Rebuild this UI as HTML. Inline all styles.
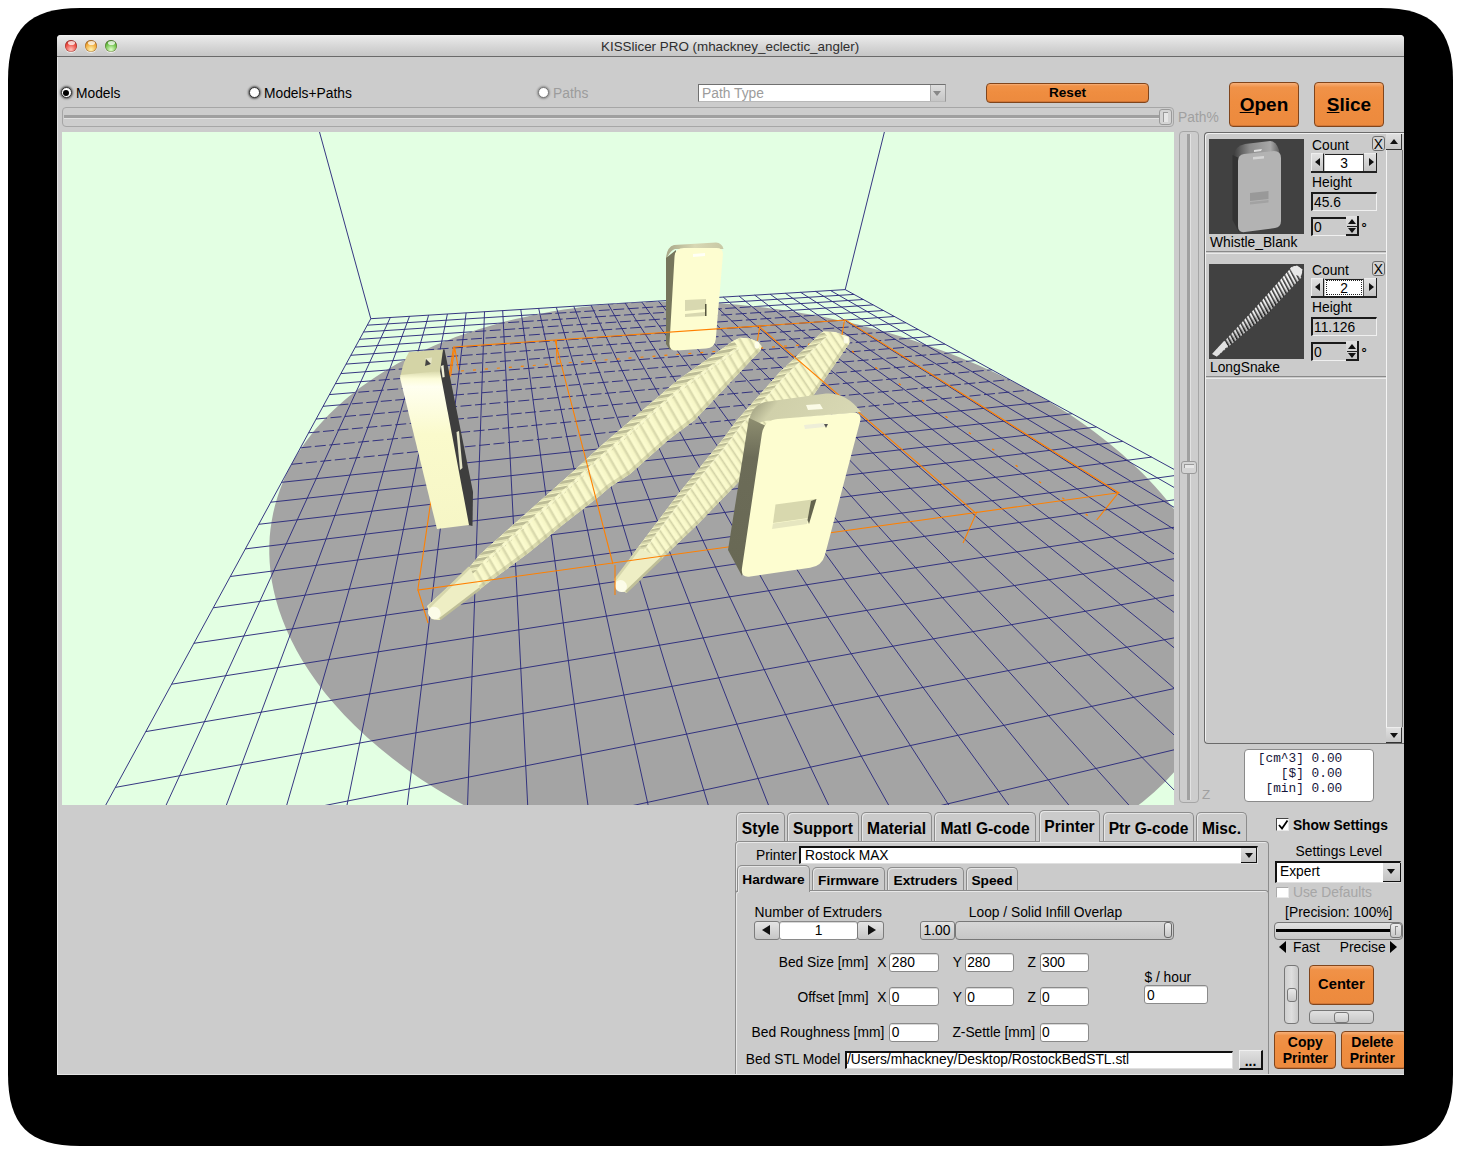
<!DOCTYPE html><html><head><meta charset="utf-8"><style>
*{box-sizing:border-box}
body{margin:0;width:1461px;height:1154px;background:#fff;position:relative;overflow:hidden;font-family:"Liberation Sans",sans-serif;color:#000}
.a{position:absolute}
.t{position:absolute;white-space:nowrap;line-height:1;font-size:13.8px}
.ob{position:absolute;background:linear-gradient(#f7b07a 0,#f09248 10%,#ef8d40 45%,#ec8a3e 100%);border:1px solid #80451c;border-radius:4px;font-weight:bold;text-align:center;white-space:nowrap;box-shadow:inset 0 -1px 0 #d27636}
.tab{position:absolute;background:#cbcbcb;border:1px solid #8c8c8c;border-bottom:none;border-radius:5px 5px 0 0;box-shadow:inset 1px 1px 0 #e6e6e6}
.fld{position:absolute;background:#fff;border:1px solid #8a8a8a;border-radius:3px;box-shadow:inset 0 1px 0 #d8d8d8}
.sb{position:absolute;background:linear-gradient(#e4e4e4,#c6c6c6);border:1px solid #7c7c7c;border-radius:3px}
</style></head><body><svg class="a" style="left:0;top:0" width="1461" height="1154"><path d="M80 8L1381 8C1432.12 8 1453 28.880000000000003 1453 80L1453 1074C1453 1125.12 1432.12 1146 1381 1146L80 1146C28.880000000000003 1146 8 1125.12 8 1074L8 80C8 28.880000000000003 28.880000000000003 8 80 8Z" fill="#000"/></svg>
<div class="a" style="left:57px;top:35px;width:1347px;height:1040px;background:#cccccc;border-radius:4px 4px 0 0;border-left:1px solid #e4e4e4;border-bottom:1px solid #e4e4e4"></div>
<div class="a" style="left:57px;top:35px;width:1347px;height:22px;background:linear-gradient(#f2f2f2 0,#e8e8e8 10%,#d6d6d6 55%,#c6c6c6 100%);border-radius:4px 4px 0 0;border-bottom:1px solid #6a6a6a"></div>
<div class="a" style="left:65px;top:40px;width:12px;height:12px;border-radius:50%;background:radial-gradient(circle at 50% 80%,#ffc0b8 0,#ea4a40 55%,#9a2820 100%);box-shadow:0 1px 1px rgba(255,255,255,.7),inset 0 0 0 0.6px rgba(60,0,0,.35)"></div>
<div class="a" style="left:67.5px;top:41px;width:7px;height:3.5px;border-radius:50%;background:rgba(255,255,255,.75)"></div>
<div class="a" style="left:85px;top:40px;width:12px;height:12px;border-radius:50%;background:radial-gradient(circle at 50% 80%,#fff4b0 0,#f0a838 55%,#9a6418 100%);box-shadow:0 1px 1px rgba(255,255,255,.7),inset 0 0 0 0.6px rgba(60,0,0,.35)"></div>
<div class="a" style="left:87.5px;top:41px;width:7px;height:3.5px;border-radius:50%;background:rgba(255,255,255,.75)"></div>
<div class="a" style="left:105px;top:40px;width:12px;height:12px;border-radius:50%;background:radial-gradient(circle at 50% 80%,#e0ffc8 0,#6cc048 55%,#347a22 100%);box-shadow:0 1px 1px rgba(255,255,255,.7),inset 0 0 0 0.6px rgba(60,0,0,.35)"></div>
<div class="a" style="left:107.5px;top:41px;width:7px;height:3.5px;border-radius:50%;background:rgba(255,255,255,.75)"></div>
<div class="t" style="left:601.0px;top:40.21px;font-size:13.4px;color:#2e2e2e">KISSlicer PRO (mhackney_eclectic_angler)</div>
<div class="a" style="left:60.5px;top:87.2px;width:11px;height:11px;border-radius:50%;background:#fff;border:1.5px solid #333;box-shadow:0 0 2px 1px rgba(0,0,0,.55)"></div>
<div class="a" style="left:63px;top:89.7px;width:6px;height:6px;border-radius:50%;background:#000"></div>
<div class="t" style="left:76.0px;top:86.78px;font-size:13.8px;">Models</div>
<div class="a" style="left:248.5px;top:87.4px;width:11px;height:11px;border-radius:50%;background:#fff;border:1.5px solid #333;box-shadow:0 0 2px 1px rgba(0,0,0,.55)"></div>
<div class="t" style="left:264.0px;top:86.78px;font-size:13.8px;">Models+Paths</div>
<div class="a" style="left:537.5px;top:87.3px;width:11px;height:11px;border-radius:50%;background:#fff;border:1.5px solid #777;box-shadow:0 0 2px 1px rgba(0,0,0,.3)"></div>
<div class="t" style="left:553.0px;top:86.78px;font-size:13.8px;color:#9c9c9c">Paths</div>
<div class="a" style="left:698px;top:84px;width:248px;height:18px;background:#fff;border:1px solid #707070;border-bottom-color:#b8b8b8;border-right-color:#999"></div>
<div class="a" style="left:930px;top:85px;width:15px;height:16px;background:linear-gradient(#dedede,#c6c6c6);border-left:1px solid #aaa"></div>
<div class="a" style="left:933px;top:91px;width:0;height:0;border-left:4.5px solid transparent;border-right:4.5px solid transparent;border-top:5px solid #888"></div>
<div class="t" style="left:702.0px;top:86.68px;font-size:13.8px;color:#9c9c9c">Path Type</div>
<div class="ob" style="left:986px;top:83px;width:163px;height:20px;font-size:13.6px;line-height:18px">Reset</div>
<div class="ob" style="left:1229px;top:82px;width:70px;height:45px;font-size:19px;line-height:43px"><u>O</u>pen</div>
<div class="ob" style="left:1314px;top:82px;width:70px;height:45px;font-size:19px;line-height:43px"><u>S</u>lice</div>
<div class="a" style="left:62px;top:107px;width:1112px;height:20px;border:1px solid #a6a6a6;border-radius:4px;background:#cdcdcd"></div>
<div class="a" style="left:64px;top:115px;width:1106px;height:4px;background:#a0a0a0;border-bottom:1px solid #e2e2e2"></div>
<div class="a" style="left:1159px;top:109px;width:13px;height:16px;border:1px solid #9a9a9a;border-radius:3px;background:#d4d4d4"></div>
<div class="a" style="left:1163px;top:112px;width:5px;height:10px;border-left:1px solid #999;border-top:1px solid #999;background:#e6e6e6"></div>
<div class="t" style="left:1178.0px;top:111.08px;font-size:13.8px;color:#a0a0a0">Path%</div>
<div class="a" style="left:62px;top:132px;width:1112px;height:673px;overflow:hidden"><svg width="1112" height="673" viewBox="62 132 1112 673" style="position:absolute;left:0;top:0;display:block">
<defs>
<linearGradient id="w1top" x1="0" y1="0" x2="1" y2="0"><stop offset="0" stop-color="#a8a888"/><stop offset="0.5" stop-color="#d8d8b4"/><stop offset="1" stop-color="#c8c8a4"/></linearGradient>
<linearGradient id="w2face" x1="0" y1="0" x2="0" y2="1"><stop offset="0" stop-color="#d8d8aa"/><stop offset="0.05" stop-color="#fcfcd8"/><stop offset="0.1" stop-color="#fffff0"/><stop offset="0.4" stop-color="#fafacc"/><stop offset="1" stop-color="#f6f6c6"/></linearGradient>
<linearGradient id="w3top" x1="0" y1="0" x2="1" y2="0.3"><stop offset="0" stop-color="#8a8a6e"/><stop offset="0.3" stop-color="#d0d0aa"/><stop offset="1" stop-color="#d8d8b4"/></linearGradient>
<linearGradient id="w3side" x1="0" y1="0" x2="0" y2="1"><stop offset="0" stop-color="#8e8e70"/><stop offset="0.25" stop-color="#6c6c58"/><stop offset="1" stop-color="#686854"/></linearGradient>
<linearGradient id="ribg" x1="0" x2="1" y1="0" y2="0"><stop offset="0" stop-color="#fcfcd0"/><stop offset="0.5" stop-color="#f6f6c6"/><stop offset="0.66" stop-color="#e2e2b4"/><stop offset="0.8" stop-color="#d0d0a6"/><stop offset="0.9" stop-color="#eeeebe"/><stop offset="1" stop-color="#fcfcd0"/></linearGradient>
<pattern id="rib1" patternUnits="userSpaceOnUse" width="8.6" height="200" patternTransform="rotate(-30)"><rect width="8.6" height="200" fill="url(#ribg)"/></pattern>
<pattern id="rib2" patternUnits="userSpaceOnUse" width="7" height="200" patternTransform="rotate(-34)"><rect width="7" height="200" fill="url(#ribg)"/></pattern>
<linearGradient id="rimg" x1="0" x2="1" y1="0" y2="0"><stop offset="0" stop-color="#fafac8"/><stop offset="0.35" stop-color="#e8e8b8"/><stop offset="1" stop-color="#9c9c78"/></linearGradient>
<pattern id="rim1" patternUnits="userSpaceOnUse" width="200" height="5.6" patternTransform="rotate(-10)"><rect width="200" height="5.6" fill="#f4f4c4"/><rect width="200" height="2.8" fill="#bcbc96"/><rect y="3.2" width="200" height="1.2" fill="#d8d8ae"/></pattern>
<pattern id="rim2" patternUnits="userSpaceOnUse" width="200" height="4.6" patternTransform="rotate(-12)"><rect width="200" height="4.6" fill="#f4f4c4"/><rect width="200" height="2.3" fill="#bcbc96"/><rect y="2.6" width="200" height="1" fill="#d8d8ae"/></pattern>
<linearGradient id="sh1" gradientUnits="userSpaceOnUse" x1="560" y1="470" x2="600" y2="517"><stop offset="0" stop-color="#000" stop-opacity="0.22"/><stop offset="0.25" stop-color="#000" stop-opacity="0"/><stop offset="0.8" stop-color="#fff" stop-opacity="0.05"/><stop offset="1" stop-color="#000" stop-opacity="0.08"/></linearGradient>
<linearGradient id="sh2" gradientUnits="userSpaceOnUse" x1="700" y1="455" x2="740" y2="490"><stop offset="0" stop-color="#000" stop-opacity="0.22"/><stop offset="0.3" stop-color="#000" stop-opacity="0"/><stop offset="1" stop-color="#000" stop-opacity="0.05"/></linearGradient>
</defs>
<rect x="62" y="132" width="1112" height="673" fill="#e3ffe3"/>
<polygon points="1029.0,390.1 1036.3,394.2 1043.7,398.4 1051.0,402.7 1058.2,407.2 1065.5,411.8 1072.8,416.6 1080.0,421.5 1087.1,426.5 1094.3,431.8 1101.4,437.2 1108.4,442.7 1115.3,448.4 1122.2,454.3 1129.0,460.4 1135.7,466.7 1142.3,473.1 1148.8,479.7 1155.1,486.5 1161.3,493.6 1167.4,500.8 1173.2,508.2 1178.9,515.8 1184.3,523.6 1189.5,531.6 1194.5,539.8 1199.2,548.2 1203.6,556.8 1207.6,565.7 1211.3,574.7 1214.6,583.9 1217.6,593.3 1220.1,602.9 1222.1,612.7 1223.7,622.7 1224.7,632.8 1225.1,643.0 1225.0,653.4 1224.2,664.0 1222.8,674.6 1220.7,685.4 1217.8,696.2 1214.2,707.0 1209.8,717.9 1204.5,728.8 1198.4,739.6 1191.4,750.4 1183.5,761.1 1174.7,771.6 1164.9,782.0 1154.1,792.2 1142.3,802.2 1129.5,811.8 1115.8,821.1 1101.0,830.1 1085.3,838.6 1068.6,846.7 1051.0,854.2 1032.5,861.2 1013.1,867.7 992.9,873.5 971.9,878.7 950.2,883.1 927.9,886.9 905.0,889.9 881.6,892.1 857.8,893.6 833.6,894.3 809.3,894.2 784.7,893.3 760.1,891.7 735.6,889.2 711.1,886.0 686.9,882.1 662.9,877.5 639.4,872.2 616.2,866.2 593.6,859.6 571.5,852.4 550.1,844.7 529.3,836.5 509.3,827.9 490.1,818.8 471.6,809.4 454.0,799.7 437.2,789.6 421.3,779.4 406.3,768.9 392.2,758.3 378.9,747.6 366.5,736.7 354.9,725.8 344.2,714.9 334.3,704.0 325.2,693.2 316.9,682.3 309.4,671.6 302.6,660.9 296.6,650.4 291.2,640.0 286.5,629.8 282.4,619.6 278.9,609.7 276.0,600.0 273.7,590.4 271.8,581.0 270.5,571.8 269.7,562.8 269.3,554.0 269.3,545.4 269.7,537.0 270.5,528.9 271.7,520.9 273.2,513.1 275.0,505.5 277.1,498.2 279.5,491.0 282.1,484.0 285.0,477.3 288.1,470.7 291.5,464.3 295.0,458.1 298.7,452.0 302.6,446.2 306.7,440.5 310.9,435.0 315.2,429.6 319.7,424.4 324.3,419.4 329.0,414.5 333.9,409.8 338.8,405.2 343.8,400.8 348.9,396.5 354.1,392.4 359.3,388.3 364.6,384.4 370.0,380.7 375.5,377.0 381.0,373.5 386.5,370.1 392.1,366.8 397.7,363.6 403.4,360.5 409.1,357.5 414.8,354.6 420.6,351.9 426.3,349.2 432.2,346.6 438.0,344.1 443.9,341.7 449.7,339.4 455.6,337.1 461.5,335.0 467.5,332.9 473.4,330.9 479.4,329.0 485.4,327.2 491.3,325.4 497.3,323.8 503.3,322.1 509.3,320.6 515.4,319.1 521.4,317.7 527.4,316.4 533.5,315.1 539.5,313.9 545.6,312.7 551.7,311.6 557.8,310.6 563.8,309.6 569.9,308.7 576.0,307.9 582.2,307.1 588.3,306.4 594.4,305.7 600.5,305.0 606.7,304.5 612.8,304.0 619.0,303.5 625.2,303.1 631.4,302.7 637.5,302.4 643.8,302.2 650.0,302.0 656.2,301.9 662.4,301.8 668.7,301.7 675.0,301.8 681.2,301.8 687.5,301.9 693.8,302.1 700.2,302.3 706.5,302.6 712.9,302.9 719.2,303.3 725.6,303.8 732.0,304.3 738.4,304.8 744.9,305.4 751.4,306.1 757.8,306.8 764.3,307.5 770.9,308.4 777.4,309.2 784.0,310.2 790.6,311.2 797.2,312.2 803.8,313.4 810.5,314.5 817.2,315.8 823.9,317.1 830.6,318.5 837.4,319.9 844.2,321.4 851.0,323.0 857.8,324.6 864.7,326.4 871.6,328.2 878.5,330.0 885.4,332.0 892.4,334.0 899.4,336.1 906.4,338.3 913.5,340.5 920.5,342.9 927.6,345.3 934.8,347.9 941.9,350.5 949.1,353.2 956.3,356.0 963.5,358.9 970.7,362.0 978.0,365.1 985.2,368.3 992.5,371.6 999.8,375.1 1007.1,378.7 1014.4,382.4 1021.7,386.2" fill="#a4a4a4"/>
<clipPath id="inE"><path d="M1029.0 390.1 L1036.3 394.2 L1043.7 398.4 L1051.0 402.7 L1058.2 407.2 L1065.5 411.8 L1072.8 416.6 L1080.0 421.5 L1087.1 426.5 L1094.3 431.8 L1101.4 437.2 L1108.4 442.7 L1115.3 448.4 L1122.2 454.3 L1129.0 460.4 L1135.7 466.7 L1142.3 473.1 L1148.8 479.7 L1155.1 486.5 L1161.3 493.6 L1167.4 500.8 L1173.2 508.2 L1178.9 515.8 L1184.3 523.6 L1189.5 531.6 L1194.5 539.8 L1199.2 548.2 L1203.6 556.8 L1207.6 565.7 L1211.3 574.7 L1214.6 583.9 L1217.6 593.3 L1220.1 602.9 L1222.1 612.7 L1223.7 622.7 L1224.7 632.8 L1225.1 643.0 L1225.0 653.4 L1224.2 664.0 L1222.8 674.6 L1220.7 685.4 L1217.8 696.2 L1214.2 707.0 L1209.8 717.9 L1204.5 728.8 L1198.4 739.6 L1191.4 750.4 L1183.5 761.1 L1174.7 771.6 L1164.9 782.0 L1154.1 792.2 L1142.3 802.2 L1129.5 811.8 L1115.8 821.1 L1101.0 830.1 L1085.3 838.6 L1068.6 846.7 L1051.0 854.2 L1032.5 861.2 L1013.1 867.7 L992.9 873.5 L971.9 878.7 L950.2 883.1 L927.9 886.9 L905.0 889.9 L881.6 892.1 L857.8 893.6 L833.6 894.3 L809.3 894.2 L784.7 893.3 L760.1 891.7 L735.6 889.2 L711.1 886.0 L686.9 882.1 L662.9 877.5 L639.4 872.2 L616.2 866.2 L593.6 859.6 L571.5 852.4 L550.1 844.7 L529.3 836.5 L509.3 827.9 L490.1 818.8 L471.6 809.4 L454.0 799.7 L437.2 789.6 L421.3 779.4 L406.3 768.9 L392.2 758.3 L378.9 747.6 L366.5 736.7 L354.9 725.8 L344.2 714.9 L334.3 704.0 L325.2 693.2 L316.9 682.3 L309.4 671.6 L302.6 660.9 L296.6 650.4 L291.2 640.0 L286.5 629.8 L282.4 619.6 L278.9 609.7 L276.0 600.0 L273.7 590.4 L271.8 581.0 L270.5 571.8 L269.7 562.8 L269.3 554.0 L269.3 545.4 L269.7 537.0 L270.5 528.9 L271.7 520.9 L273.2 513.1 L275.0 505.5 L277.1 498.2 L279.5 491.0 L282.1 484.0 L285.0 477.3 L288.1 470.7 L291.5 464.3 L295.0 458.1 L298.7 452.0 L302.6 446.2 L306.7 440.5 L310.9 435.0 L315.2 429.6 L319.7 424.4 L324.3 419.4 L329.0 414.5 L333.9 409.8 L338.8 405.2 L343.8 400.8 L348.9 396.5 L354.1 392.4 L359.3 388.3 L364.6 384.4 L370.0 380.7 L375.5 377.0 L381.0 373.5 L386.5 370.1 L392.1 366.8 L397.7 363.6 L403.4 360.5 L409.1 357.5 L414.8 354.6 L420.6 351.9 L426.3 349.2 L432.2 346.6 L438.0 344.1 L443.9 341.7 L449.7 339.4 L455.6 337.1 L461.5 335.0 L467.5 332.9 L473.4 330.9 L479.4 329.0 L485.4 327.2 L491.3 325.4 L497.3 323.8 L503.3 322.1 L509.3 320.6 L515.4 319.1 L521.4 317.7 L527.4 316.4 L533.5 315.1 L539.5 313.9 L545.6 312.7 L551.7 311.6 L557.8 310.6 L563.8 309.6 L569.9 308.7 L576.0 307.9 L582.2 307.1 L588.3 306.4 L594.4 305.7 L600.5 305.0 L606.7 304.5 L612.8 304.0 L619.0 303.5 L625.2 303.1 L631.4 302.7 L637.5 302.4 L643.8 302.2 L650.0 302.0 L656.2 301.9 L662.4 301.8 L668.7 301.7 L675.0 301.8 L681.2 301.8 L687.5 301.9 L693.8 302.1 L700.2 302.3 L706.5 302.6 L712.9 302.9 L719.2 303.3 L725.6 303.8 L732.0 304.3 L738.4 304.8 L744.9 305.4 L751.4 306.1 L757.8 306.8 L764.3 307.5 L770.9 308.4 L777.4 309.2 L784.0 310.2 L790.6 311.2 L797.2 312.2 L803.8 313.4 L810.5 314.5 L817.2 315.8 L823.9 317.1 L830.6 318.5 L837.4 319.9 L844.2 321.4 L851.0 323.0 L857.8 324.6 L864.7 326.4 L871.6 328.2 L878.5 330.0 L885.4 332.0 L892.4 334.0 L899.4 336.1 L906.4 338.3 L913.5 340.5 L920.5 342.9 L927.6 345.3 L934.8 347.9 L941.9 350.5 L949.1 353.2 L956.3 356.0 L963.5 358.9 L970.7 362.0 L978.0 365.1 L985.2 368.3 L992.5 371.6 L999.8 375.1 L1007.1 378.7 L1014.4 382.4 L1021.7 386.2Z"/></clipPath>
<clipPath id="outE"><path clip-rule="evenodd" d="M62 132h1112v673h-1112Z M1029.0 390.1 L1036.3 394.2 L1043.7 398.4 L1051.0 402.7 L1058.2 407.2 L1065.5 411.8 L1072.8 416.6 L1080.0 421.5 L1087.1 426.5 L1094.3 431.8 L1101.4 437.2 L1108.4 442.7 L1115.3 448.4 L1122.2 454.3 L1129.0 460.4 L1135.7 466.7 L1142.3 473.1 L1148.8 479.7 L1155.1 486.5 L1161.3 493.6 L1167.4 500.8 L1173.2 508.2 L1178.9 515.8 L1184.3 523.6 L1189.5 531.6 L1194.5 539.8 L1199.2 548.2 L1203.6 556.8 L1207.6 565.7 L1211.3 574.7 L1214.6 583.9 L1217.6 593.3 L1220.1 602.9 L1222.1 612.7 L1223.7 622.7 L1224.7 632.8 L1225.1 643.0 L1225.0 653.4 L1224.2 664.0 L1222.8 674.6 L1220.7 685.4 L1217.8 696.2 L1214.2 707.0 L1209.8 717.9 L1204.5 728.8 L1198.4 739.6 L1191.4 750.4 L1183.5 761.1 L1174.7 771.6 L1164.9 782.0 L1154.1 792.2 L1142.3 802.2 L1129.5 811.8 L1115.8 821.1 L1101.0 830.1 L1085.3 838.6 L1068.6 846.7 L1051.0 854.2 L1032.5 861.2 L1013.1 867.7 L992.9 873.5 L971.9 878.7 L950.2 883.1 L927.9 886.9 L905.0 889.9 L881.6 892.1 L857.8 893.6 L833.6 894.3 L809.3 894.2 L784.7 893.3 L760.1 891.7 L735.6 889.2 L711.1 886.0 L686.9 882.1 L662.9 877.5 L639.4 872.2 L616.2 866.2 L593.6 859.6 L571.5 852.4 L550.1 844.7 L529.3 836.5 L509.3 827.9 L490.1 818.8 L471.6 809.4 L454.0 799.7 L437.2 789.6 L421.3 779.4 L406.3 768.9 L392.2 758.3 L378.9 747.6 L366.5 736.7 L354.9 725.8 L344.2 714.9 L334.3 704.0 L325.2 693.2 L316.9 682.3 L309.4 671.6 L302.6 660.9 L296.6 650.4 L291.2 640.0 L286.5 629.8 L282.4 619.6 L278.9 609.7 L276.0 600.0 L273.7 590.4 L271.8 581.0 L270.5 571.8 L269.7 562.8 L269.3 554.0 L269.3 545.4 L269.7 537.0 L270.5 528.9 L271.7 520.9 L273.2 513.1 L275.0 505.5 L277.1 498.2 L279.5 491.0 L282.1 484.0 L285.0 477.3 L288.1 470.7 L291.5 464.3 L295.0 458.1 L298.7 452.0 L302.6 446.2 L306.7 440.5 L310.9 435.0 L315.2 429.6 L319.7 424.4 L324.3 419.4 L329.0 414.5 L333.9 409.8 L338.8 405.2 L343.8 400.8 L348.9 396.5 L354.1 392.4 L359.3 388.3 L364.6 384.4 L370.0 380.7 L375.5 377.0 L381.0 373.5 L386.5 370.1 L392.1 366.8 L397.7 363.6 L403.4 360.5 L409.1 357.5 L414.8 354.6 L420.6 351.9 L426.3 349.2 L432.2 346.6 L438.0 344.1 L443.9 341.7 L449.7 339.4 L455.6 337.1 L461.5 335.0 L467.5 332.9 L473.4 330.9 L479.4 329.0 L485.4 327.2 L491.3 325.4 L497.3 323.8 L503.3 322.1 L509.3 320.6 L515.4 319.1 L521.4 317.7 L527.4 316.4 L533.5 315.1 L539.5 313.9 L545.6 312.7 L551.7 311.6 L557.8 310.6 L563.8 309.6 L569.9 308.7 L576.0 307.9 L582.2 307.1 L588.3 306.4 L594.4 305.7 L600.5 305.0 L606.7 304.5 L612.8 304.0 L619.0 303.5 L625.2 303.1 L631.4 302.7 L637.5 302.4 L643.8 302.2 L650.0 302.0 L656.2 301.9 L662.4 301.8 L668.7 301.7 L675.0 301.8 L681.2 301.8 L687.5 301.9 L693.8 302.1 L700.2 302.3 L706.5 302.6 L712.9 302.9 L719.2 303.3 L725.6 303.8 L732.0 304.3 L738.4 304.8 L744.9 305.4 L751.4 306.1 L757.8 306.8 L764.3 307.5 L770.9 308.4 L777.4 309.2 L784.0 310.2 L790.6 311.2 L797.2 312.2 L803.8 313.4 L810.5 314.5 L817.2 315.8 L823.9 317.1 L830.6 318.5 L837.4 319.9 L844.2 321.4 L851.0 323.0 L857.8 324.6 L864.7 326.4 L871.6 328.2 L878.5 330.0 L885.4 332.0 L892.4 334.0 L899.4 336.1 L906.4 338.3 L913.5 340.5 L920.5 342.9 L927.6 345.3 L934.8 347.9 L941.9 350.5 L949.1 353.2 L956.3 356.0 L963.5 358.9 L970.7 362.0 L978.0 365.1 L985.2 368.3 L992.5 371.6 L999.8 375.1 L1007.1 378.7 L1014.4 382.4 L1021.7 386.2Z"/></clipPath>
<path d="M370.8 318.7L-88.6 1161.7M390.3 317.5L14.8 1134.2M409.5 316.3L112.9 1108.0M428.6 315.2L206.2 1083.1M447.4 314.0L295.0 1059.5M466.1 312.9L379.6 1036.9M484.5 311.7L460.3 1015.4M502.7 310.6L537.3 994.9M520.8 309.5L611.0 975.3M538.7 308.4L681.5 956.5M556.3 307.3L749.0 938.5M573.8 306.3L813.8 921.2M591.1 305.2L875.9 904.7M608.2 304.1L935.5 888.8M625.2 303.1L992.9 873.5M641.9 302.1L1048.0 858.8M281.6 482.3L1049.8 401.4M658.5 301.1L1101.1 844.7M270.8 502.2L1072.2 413.7M675.0 300.0L1152.2 831.0M258.7 524.3L1096.4 427.0M691.2 299.0L1201.5 817.9M245.3 548.9L1122.8 441.4M707.3 298.1L1249.0 805.2M230.3 576.5L1151.6 457.1M723.3 297.1L1294.9 793.0M213.3 607.8L1183.2 474.4M739.0 296.1L1339.2 781.2M193.9 643.3L1217.9 493.4M754.7 295.1L1382.1 769.8M171.6 684.2L1256.3 514.4M770.1 294.2L1423.5 758.7M145.8 731.6L1298.9 537.7M785.4 293.3L1463.5 748.1M115.4 787.4L1346.7 563.8M800.6 292.3L1502.3 737.7M79.1 854.0L1400.4 593.2M815.6 291.4L1539.9 727.7M35.1 934.7L1461.3 626.5M830.5 290.5L1576.2 718.0M-19.3 1034.7L1531.0 664.6M845.2 289.6L1611.5 708.6M-88.6 1161.7L1611.5 708.6M370.8 318.7L319.5 132M845.2 289.6L884.4 132" stroke="#2c2c7c" stroke-width="0.95" fill="none"/>
<path d="M370.8 318.7L845.2 289.6M367.2 325.2L854.1 294.4M363.5 332.0L863.4 299.5M359.5 339.3L873.2 304.9M355.3 347.1L883.5 310.5M350.8 355.3L894.4 316.5M346.0 364.1L905.9 322.8M340.9 373.6L918.2 329.5M335.4 383.7L931.1 336.5M329.4 394.6L944.9 344.1M323.0 406.3L959.5 352.1M316.1 419.0L975.2 360.6M308.6 432.8L991.9 369.8M300.4 447.8L1009.8 379.6M291.5 464.3L1029.0 390.1" stroke="#2c2c7c" stroke-width="0.95" fill="none" clip-path="url(#outE)"/>
<path d="M370.8 318.7L845.2 289.6M367.2 325.2L854.1 294.4M363.5 332.0L863.4 299.5M359.5 339.3L873.2 304.9M355.3 347.1L883.5 310.5M350.8 355.3L894.4 316.5M346.0 364.1L905.9 322.8M340.9 373.6L918.2 329.5M335.4 383.7L931.1 336.5M329.4 394.6L944.9 344.1M323.0 406.3L959.5 352.1M316.1 419.0L975.2 360.6M308.6 432.8L991.9 369.8M300.4 447.8L1009.8 379.6M291.5 464.3L1029.0 390.1" stroke="#2c2c7c" stroke-width="0.95" fill="none" clip-path="url(#inE)" stroke-dasharray="11 3.5"/>
<path d="M666 258Q667 247 674 245L716 242.5Q722 243 723.5 249L675 249Q670 251 667 258Z" fill="url(#w1top)"/>
<polygon points="666.0,258.0 676.0,250.0 675.0,345.0 670.0,350.0 666.0,344.0" fill="#76765c"/>
<path d="M674.5 257.0Q675.0 248.0 684.0 248.0L716.5 248.0Q723.5 248.0 722.9 255.0L715.8 339.0Q715.0 348.0 706.0 348.6L677.0 350.5Q669.0 351.0 669.5 343.0Z" fill="#fdfdd0"/>
<polygon points="685.0,300.0 706.0,299.0 706.0,309.0 685.0,311.0" fill="#d8d8b0"/>
<polygon points="685.0,314.0 705.0,312.0 705.0,316.0 685.0,317.0" fill="#d8d8b0"/>
<polygon points="705.0,304.0 706.5,304.0 706.5,316.0 705.0,316.0" fill="#55553f"/>
<polygon points="693.0,254.0 705.0,253.0 705.0,256.0 693.0,257.0" fill="#ffffff" opacity="0.8"/>
<path d="M461 371L839 342" stroke="#ff8000" stroke-width="1.2" fill="none" stroke-dasharray="3 9"/>
<path d="M852 351L1097 522" stroke="#ff8000" stroke-width="1.3" fill="none" stroke-dasharray="2.5 26"/>
<clipPath id="cs1"><path d="M428.0 607.0 L469.7 567.0 L480.0 554.5 L574.9 470.0 L600.0 446.7 L678.0 380.0 L733.7 340.8 L739.8 337.8 L750.0 338.5 L758.0 342.1 L761.5 346.0 L760.6 350.3 L694.7 420.0 L668.2 440.0 L630.0 474.0 L610.0 487.1 L599.6 496.0 L563.2 524.6 L528.1 553.2 L487.8 583.1 L480.2 589.0 L439.6 619.8 L432.0 619.0 L428.0 613.0Z"/></clipPath>
<path d="M428.0 607.0 L469.7 567.0 L480.0 554.5 L574.9 470.0 L600.0 446.7 L678.0 380.0 L733.7 340.8 L739.8 337.8 L750.0 338.5 L758.0 342.1 L761.5 346.0 L760.6 350.3 L694.7 420.0 L668.2 440.0 L630.0 474.0 L610.0 487.1 L599.6 496.0 L563.2 524.6 L528.1 553.2 L487.8 583.1 L480.2 589.0 L439.6 619.8 L432.0 619.0 L428.0 613.0Z" fill="#f6f6c8"/>
<g clip-path="url(#cs1)">
<rect x="420" y="330" width="350" height="300" fill="url(#rib1)"/>
<path d="M760.6 350.3 L694.7 420.0 L668.2 440.0 L630.0 474.0 L610.0 487.1 L599.6 496.0 L563.2 524.6 L528.1 553.2 L487.8 583.1 L480.2 589.0 L439.6 619.8" stroke="#a0a078" stroke-opacity=".35" stroke-width="7" fill="none"/>
<path d="M428.0 607.0 L469.7 567.0 L480.0 554.5 L574.9 470.0 L600.0 446.7 L678.0 380.0 L733.7 340.8" stroke="url(#rim1)" stroke-width="14" fill="none"/>
<path d="M485.8 561.3 L580.7 476.8 L605.8 453.5 L683.8 386.8 L739.5 347.6" stroke="#f6f6d4" stroke-opacity=".7" stroke-width="1" fill="none"/>
<path d="M486.8 562.3 L581.7 477.8 L606.8 454.5 L684.8 387.8 L740.5 348.6" stroke="#c4c49c" stroke-opacity=".6" stroke-width="1" stroke-dasharray="2 6" fill="none"/>
</g>
<polygon points="427.0,606.0 469.7,567.0 480.2,589.0 439.6,619.8 432.0,619.0" fill="#eeeec4"/>
<path d="M429 607L469.5 567.5" stroke="#d6d6ac" stroke-width="2.5"/>
<path d="M440 619L480 588.5" stroke="#bfbf98" stroke-width="2.5"/>
<ellipse cx="434.5" cy="613" rx="6" ry="6.5" fill="#fcfce8" transform="rotate(-40 434.5 613)"/>
<ellipse cx="757" cy="345" rx="2.5" ry="3.5" fill="#ffffee" opacity=".85"/>
<clipPath id="cs2"><path d="M615.5 580.0 L637.7 548.1 L679.3 492.7 L722.3 440.0 L737.2 420.0 L780.0 372.0 L823.0 331.5 L835.0 332.0 L849.0 337.0 L849.5 343.0 L847.8 345.5 L814.0 394.5 L760.0 460.0 L740.3 480.2 L698.7 523.2 L662.7 557.8 L626.6 592.5 L617.0 590.0Z"/></clipPath>
<path d="M615.5 580.0 L637.7 548.1 L679.3 492.7 L722.3 440.0 L737.2 420.0 L780.0 372.0 L823.0 331.5 L835.0 332.0 L849.0 337.0 L849.5 343.0 L847.8 345.5 L814.0 394.5 L760.0 460.0 L740.3 480.2 L698.7 523.2 L662.7 557.8 L626.6 592.5 L617.0 590.0Z" fill="#f6f6c8"/>
<g clip-path="url(#cs2)">
<rect x="600" y="320" width="260" height="280" fill="url(#rib2)"/>
<path d="M847.8 345.5 L814.0 394.5 L760.0 460.0 L740.3 480.2 L698.7 523.2 L662.7 557.8 L626.6 592.5" stroke="#a0a078" stroke-opacity=".35" stroke-width="6" fill="none"/>
<path d="M615.5 580.0 L637.7 548.1 L679.3 492.7 L722.3 440.0 L737.2 420.0 L780.0 372.0 L823.0 331.5" stroke="url(#rim2)" stroke-width="12" fill="none"/>
<path d="M643.0 552.7 L684.6 497.3 L727.6 444.6 L742.5 424.6 L785.3 376.6 L828.3 336.1" stroke="#f6f6d4" stroke-opacity=".7" stroke-width="1" fill="none"/>
</g>
<polygon points="614.5,580.0 637.7,548.1 662.7,557.8 626.6,592.5 617.0,590.0" fill="#eeeec4"/>
<path d="M615 580L640.5 546.5" stroke="#d6d6ac" stroke-width="2.5"/>
<path d="M626 592L662 557.5" stroke="#bfbf98" stroke-width="2.5"/>
<ellipse cx="621.1" cy="585.6" rx="5.8" ry="6.2" fill="#fcfce8" transform="rotate(-45 621.5 586)"/>
<ellipse cx="846" cy="340" rx="2.5" ry="3.5" fill="#ffffee" opacity=".85"/>
<path d="M453.5 347.0 L845.7 320.0 L1118.7 492.7 L417.8 590.0ZM555.0 340.2L612.9 564.0M758.2 325.7L975.6 512.9M418 590L428 623M615 565L615 595M977 511.6L963 543M1118.5 492.7L1096.7 520M454.7 347.8L450.6 376.5M454.7 347.8L458.8 370.3M556.4 340.6L557 364.2M760 325.6L757.4 340.6M844.5 319.8L842 335" stroke="#ff8000" stroke-width="1.1" fill="none"/>
<polygon points="442.5,349.5 444.5,349.5 473.0,492.0 472.5,526.0 468.0,525.0 438.3,379.0" fill="#3e3e3e"/>
<path d="M400.5 376Q403 362 409 352L443 349.5L440 371.5Z" fill="#d4d4a6"/>
<polygon points="400.5,375.0 440.0,371.0 469.0,525.0 437.0,529.0 400.0,378.0" fill="url(#w2face)"/>
<polygon points="425.0,358.5 432.0,357.5 431.0,365.5" fill="#e8e8c8"/>
<polygon points="426.0,359.0 431.0,364.0 425.0,366.0" fill="#444"/>
<polygon points="456.5,432.0 459.0,431.0 462.5,468.0 460.0,470.0" fill="#e6e6c8"/>
<polygon points="441.0,366.0 443.5,365.0 444.7,377.0 442.5,377.5" fill="#f0f0d8"/>
<path d="M749 422Q751 406 765 402L826 393.5Q846 392 861 412L764 421Q754 424 750 436Z" fill="url(#w3top)"/>
<polygon points="749.0,418.0 766.0,426.0 742.0,576.0 728.0,550.0" fill="url(#w3side)"/>
<path d="M761.9 433.8Q764.0 420.0 778.0 418.9L852.5 412.8Q862.5 412.0 860.0 421.7L825.1 554.4Q822.0 566.0 810.1 567.7L750.4 576.5Q740.5 578.0 742.0 568.1Z" fill="#fdfdd0"/>
<polygon points="775.5,504.5 816.0,499.0 808.5,518.0 773.0,523.0" fill="#d8d8ae"/>
<polygon points="773.0,523.5 808.5,518.5 807.0,524.0 772.0,529.0" fill="#e6e6c0"/>
<polygon points="811.0,501.0 816.5,499.0 809.0,524.0 807.5,520.0" fill="#64644e"/>
<polygon points="806.0,405.0 820.0,404.0 823.0,409.0 808.0,410.0" fill="#fbfbe6"/>
<polygon points="804.0,425.0 824.0,423.0 825.0,427.0 805.0,429.0" fill="#eeeed8"/>
<polygon points="824.0,424.0 828.0,424.0 826.0,428.0" fill="#555"/>
</svg></div>
<div class="a" style="left:1179px;top:131px;width:20px;height:672px;border:1px solid #a6a6a6;border-radius:4px;background:#cdcdcd"></div>
<div class="a" style="left:1187px;top:134px;width:4px;height:666px;background:#a0a0a0;border-right:1px solid #e2e2e2"></div>
<div class="a" style="left:1181px;top:461px;width:16px;height:13px;border:1px solid #9a9a9a;border-radius:3px;background:#d4d4d4"></div>
<div class="a" style="left:1184px;top:464px;width:10px;height:4px;border-left:1px solid #999;border-top:1px solid #999;background:#e6e6e6"></div>
<div class="t" style="left:1202.0px;top:788.41px;font-size:13.4px;color:#a0a0a0">Z</div>
<div class="a" style="left:1204px;top:132px;width:200px;height:612px;border:1px solid #6a6a6a;border-right:none;border-radius:4px 0 0 4px;background:#cbcbcb;box-shadow:inset 1px 1px 0 #f0f0f0"></div>
<div class="a" style="left:1386px;top:150px;width:17px;height:577px;background:#c9c9c9;border-left:1px solid #f4f4f4;border-right:1px solid #777"></div>
<div class="a" style="left:1386px;top:134px;width:16px;height:16px;background:linear-gradient(#e0e0e0,#c6c6c6);border-bottom:1px solid #333;border-right:1px solid #333"></div>
<div class="a" style="left:1389.5px;top:138.5px;width:0;height:0;border-left:4.5px solid transparent;border-right:4.5px solid transparent;border-bottom:5px solid #111"></div>
<div class="a" style="left:1386px;top:727px;width:16px;height:16px;background:linear-gradient(#e0e0e0,#c6c6c6);border-bottom:1px solid #333;border-right:1px solid #333;border-top:1px solid #eee"></div>
<div class="a" style="left:1389.5px;top:732.5px;width:0;height:0;border-left:4.5px solid transparent;border-right:4.5px solid transparent;border-top:5px solid #111"></div>
<div class="a" style="left:1209px;top:139px;width:95px;height:95px;background:#414141;overflow:hidden"><svg width="95" height="95" viewBox="1209 139 95 95" style="position:absolute;left:0;top:0">
<defs><linearGradient id="t1top" x1="0" x2="1"><stop offset="0" stop-color="#3a3a3a"/><stop offset=".35" stop-color="#8a8a8a"/><stop offset=".8" stop-color="#a8a8a8"/><stop offset="1" stop-color="#5a5a5a"/></linearGradient></defs>
<path d="M1233 156Q1235 146 1245 144L1270 141Q1276 141 1279 150L1280 160L1238 160Z" fill="url(#t1top)"/>
<polygon points="1232.5,155 1239,158 1239,232 1232.5,220" fill="#333"/>
<path d="M1244 154L1274 151Q1281 151 1281 158L1281 221Q1281 227 1275 228L1245 232Q1238 233 1238 226L1238 161Q1238 155 1244 154Z" fill="#b3b3b3"/>
<polygon points="1250,193 1268.5,191 1268.5,199 1250,201" fill="#999"/>
<polygon points="1250,202 1268.5,200 1268.5,202.5 1250,204.5" fill="#a2a2a2"/>
<polygon points="1253,157 1264,156 1264,158.5 1253,159.5" fill="#d6d6d6"/>
<polygon points="1254,150 1262,149 1261,151 1254,152" fill="#e0e0e0"/>
</svg></div>
<div class="t" style="left:1210.0px;top:235.68px;font-size:13.8px;">Whistle_Blank</div>
<div class="a" style="left:1206px;top:251px;width:180px;height:3px;border-top:1px solid #8a8a8a;border-bottom:1px solid #eaeaea"></div>
<div class="t" style="left:1312.0px;top:138.58px;font-size:13.8px;">Count</div>
<div class="a" style="left:1371.5px;top:135.5px;width:13.5px;height:15.5px;border:1px solid #6c6c6c;border-radius:3px;background:#d2d2d2"></div>
<div class="t" style="left:1278.3px;width:200px;text-align:center;top:138.48px;font-size:13.8px;">X</div>
<div class="a" style="left:1311px;top:153px;width:66px;height:20px;background:#c6c6c6;border-right:1px solid #222;border-bottom:2px solid #222"></div>
<div class="a" style="left:1311px;top:153px;width:13px;height:18px;background:linear-gradient(#e2e2e2,#c4c4c4);border-right:1px solid #222;border-left:1px solid #eee;border-top:1px solid #eee"></div>
<div class="a" style="left:1363px;top:153px;width:13px;height:18px;background:linear-gradient(#e2e2e2,#c4c4c4);border-left:1px solid #555;border-top:1px solid #eee"></div>
<div class="a" style="left:1325px;top:154px;width:38px;height:17px;background:#fff;border-top:1px solid #222;"></div>
<div class="t" style="left:1244.0px;width:200px;text-align:center;top:156.68px;font-size:13.8px;">3</div>
<div class="a" style="left:1314.5px;top:158px;width:0;height:0;border-top:4.5px solid transparent;border-bottom:4.5px solid transparent;border-right:5px solid #111"></div>
<div class="a" style="left:1368.5px;top:158px;width:0;height:0;border-top:4.5px solid transparent;border-bottom:4.5px solid transparent;border-left:5px solid #111"></div>
<div class="t" style="left:1312.0px;top:176.38px;font-size:13.8px;">Height</div>
<div class="a" style="left:1311px;top:191.5px;width:66px;height:19px;background:#cbcbcb;border:1px solid #f0f0f0;border-top:2px solid #1a1a1a;border-left:2px solid #1a1a1a"></div>
<div class="t" style="left:1314.0px;top:195.68px;font-size:13.8px;">45.6</div>
<div class="a" style="left:1311px;top:216.5px;width:36px;height:19px;background:#cbcbcb;border:1px solid #f0f0f0;border-top:2px solid #1a1a1a;border-left:2px solid #1a1a1a"></div>
<div class="t" style="left:1314.0px;top:220.68px;font-size:13.8px;">0</div>
<div class="a" style="left:1346px;top:216px;width:13px;height:20px;background:linear-gradient(#e2e2e2,#c4c4c4);border-right:2px solid #1a1a1a;border-bottom:2px solid #1a1a1a"></div>
<div class="a" style="left:1347px;top:225.5px;width:11px;height:1px;background:#222"></div>
<div class="a" style="left:1348px;top:219px;width:0;height:0;border-left:4.0px solid transparent;border-right:4.0px solid transparent;border-bottom:5px solid #111"></div>
<div class="a" style="left:1348px;top:228px;width:0;height:0;border-left:4.0px solid transparent;border-right:4.0px solid transparent;border-top:5px solid #111"></div>
<div class="t" style="left:1361.5px;top:220.84px;font-size:13px;font-weight:bold">&#176;</div>
<div class="a" style="left:1209px;top:264px;width:95px;height:95px;background:#414141;overflow:hidden"><svg width="95" height="95" viewBox="1209 264 95 95" style="position:absolute;left:0;top:0">
<defs><pattern id="t2rib" patternUnits="userSpaceOnUse" width="3.6" height="40" patternTransform="rotate(-28)"><rect width="3.6" height="40" fill="#f2f2f2"/><rect width="1.5" height="40" fill="#2a2a2a"/></pattern>
<linearGradient id="t2sh" gradientUnits="userSpaceOnUse" x1="1250" y1="300" x2="1262" y2="314"><stop offset="0" stop-color="#fff" stop-opacity=".35"/><stop offset=".5" stop-color="#fff" stop-opacity="0"/><stop offset="1" stop-color="#000" stop-opacity=".25"/></linearGradient></defs>
<polygon points="1212.4,354.2 1256.3,306.8 1292.4,266.3 1297,266 1302.5,269.6 1301.4,277.5 1267.6,313.6 1216.9,356.4" fill="url(#t2rib)"/>
<polygon points="1212.4,354.2 1256.3,306.8 1292.4,266.3 1297,266 1302.5,269.6 1301.4,277.5 1267.6,313.6 1216.9,356.4" fill="url(#t2sh)"/>
<polygon points="1212,354 1224,341 1228,346 1217,356.5" fill="#e0e0e0"/>
<polygon points="1290,268 1297,265.5 1302.5,269.6 1301,276 1294,275" fill="#e8e8e8"/>
</svg></div>
<div class="t" style="left:1210.0px;top:360.68px;font-size:13.8px;">LongSnake</div>
<div class="a" style="left:1206px;top:376px;width:180px;height:3px;border-top:1px solid #8a8a8a;border-bottom:1px solid #eaeaea"></div>
<div class="t" style="left:1312.0px;top:263.58px;font-size:13.8px;">Count</div>
<div class="a" style="left:1371.5px;top:260.5px;width:13.5px;height:15.5px;border:1px solid #6c6c6c;border-radius:3px;background:#d2d2d2"></div>
<div class="t" style="left:1278.3px;width:200px;text-align:center;top:263.48px;font-size:13.8px;">X</div>
<div class="a" style="left:1311px;top:278px;width:66px;height:20px;background:#c6c6c6;border-right:1px solid #222;border-bottom:2px solid #222"></div>
<div class="a" style="left:1311px;top:278px;width:13px;height:18px;background:linear-gradient(#e2e2e2,#c4c4c4);border-right:1px solid #222;border-left:1px solid #eee;border-top:1px solid #eee"></div>
<div class="a" style="left:1363px;top:278px;width:13px;height:18px;background:linear-gradient(#e2e2e2,#c4c4c4);border-left:1px solid #555;border-top:1px solid #eee"></div>
<div class="a" style="left:1325px;top:279px;width:38px;height:17px;background:#fff;border-top:1px solid #222;outline:1px dotted #222;outline-offset:-2px;"></div>
<div class="t" style="left:1244.0px;width:200px;text-align:center;top:281.68px;font-size:13.8px;">2</div>
<div class="a" style="left:1314.5px;top:283px;width:0;height:0;border-top:4.5px solid transparent;border-bottom:4.5px solid transparent;border-right:5px solid #111"></div>
<div class="a" style="left:1368.5px;top:283px;width:0;height:0;border-top:4.5px solid transparent;border-bottom:4.5px solid transparent;border-left:5px solid #111"></div>
<div class="t" style="left:1312.0px;top:301.38px;font-size:13.8px;">Height</div>
<div class="a" style="left:1311px;top:316.5px;width:66px;height:19px;background:#cbcbcb;border:1px solid #f0f0f0;border-top:2px solid #1a1a1a;border-left:2px solid #1a1a1a"></div>
<div class="t" style="left:1314.0px;top:320.68px;font-size:13.8px;">11.126</div>
<div class="a" style="left:1311px;top:341.5px;width:36px;height:19px;background:#cbcbcb;border:1px solid #f0f0f0;border-top:2px solid #1a1a1a;border-left:2px solid #1a1a1a"></div>
<div class="t" style="left:1314.0px;top:345.68px;font-size:13.8px;">0</div>
<div class="a" style="left:1346px;top:341px;width:13px;height:20px;background:linear-gradient(#e2e2e2,#c4c4c4);border-right:2px solid #1a1a1a;border-bottom:2px solid #1a1a1a"></div>
<div class="a" style="left:1347px;top:350.5px;width:11px;height:1px;background:#222"></div>
<div class="a" style="left:1348px;top:344px;width:0;height:0;border-left:4.0px solid transparent;border-right:4.0px solid transparent;border-bottom:5px solid #111"></div>
<div class="a" style="left:1348px;top:353px;width:0;height:0;border-left:4.0px solid transparent;border-right:4.0px solid transparent;border-top:5px solid #111"></div>
<div class="t" style="left:1361.5px;top:345.84px;font-size:13px;font-weight:bold">&#176;</div>
<div class="a" style="left:1244px;top:749px;width:130px;height:53px;background:#fff;border:1px solid #8a8a8a;border-radius:4px"></div>
<div class="t" style="left:1257.8px;top:752.68px;white-space:pre;font-family:'Liberation Mono',monospace;font-size:12.8px;color:#15153a">[cm^3] 0.00</div>
<div class="t" style="left:1257.8px;top:767.68px;white-space:pre;font-family:'Liberation Mono',monospace;font-size:12.8px;color:#15153a">   [$] 0.00</div>
<div class="t" style="left:1257.8px;top:782.68px;white-space:pre;font-family:'Liberation Mono',monospace;font-size:12.8px;color:#15153a"> [min] 0.00</div>
<div class="tab" style="left:736px;top:812px;width:49px;height:29px;"></div>
<div class="t" style="left:660.5px;width:200px;text-align:center;top:820.61px;font-size:15.6px;font-weight:bold;z-index:3">Style</div>
<div class="tab" style="left:787px;top:812px;width:72px;height:29px;"></div>
<div class="t" style="left:723.0px;width:200px;text-align:center;top:820.61px;font-size:15.6px;font-weight:bold;z-index:3">Support</div>
<div class="tab" style="left:861px;top:812px;width:71px;height:29px;"></div>
<div class="t" style="left:796.5px;width:200px;text-align:center;top:820.61px;font-size:15.6px;font-weight:bold;z-index:3">Material</div>
<div class="tab" style="left:934px;top:812px;width:102px;height:29px;"></div>
<div class="t" style="left:885.0px;width:200px;text-align:center;top:820.61px;font-size:15.6px;font-weight:bold;z-index:3">Matl G-code</div>
<div class="tab" style="left:1039px;top:810px;width:61px;height:32px;z-index:2;"></div>
<div class="t" style="left:969.5px;width:200px;text-align:center;top:819.21px;font-size:15.6px;font-weight:bold;z-index:3">Printer</div>
<div class="tab" style="left:1103px;top:812px;width:91px;height:29px;"></div>
<div class="t" style="left:1048.5px;width:200px;text-align:center;top:820.61px;font-size:15.6px;font-weight:bold;z-index:3">Ptr G-code</div>
<div class="tab" style="left:1196px;top:812px;width:51px;height:29px;"></div>
<div class="t" style="left:1121.5px;width:200px;text-align:center;top:820.61px;font-size:15.6px;font-weight:bold;z-index:3">Misc.</div>
<div class="a" style="left:735px;top:841px;width:534px;height:233px;border:1px solid #8c8c8c;border-bottom:none;border-radius:4px 4px 0 0;background:#cbcbcb;box-shadow:inset 1px 1px 0 #e8e8e8"></div>
<div class="t" style="left:756.0px;top:848.68px;font-size:13.8px;">Printer</div>
<div class="a" style="left:799px;top:846px;width:459px;height:18px;background:#fff;border-top:2px solid #111;border-left:2px solid #111;border-bottom:1px solid #e0e0e0;border-right:1px solid #e0e0e0"></div>
<div class="a" style="left:1241px;top:848px;width:16px;height:15px;background:linear-gradient(#dedede,#c2c2c2);border-right:1px solid #111;border-bottom:1px solid #111"></div>
<div class="a" style="left:1244.5px;top:853px;width:0;height:0;border-left:4.5px solid transparent;border-right:4.5px solid transparent;border-top:5px solid #111"></div>
<div class="t" style="left:805.0px;top:848.68px;font-size:13.8px;">Rostock MAX</div>
<div class="tab" style="left:737px;top:865px;width:73px;height:27px;z-index:2;"></div>
<div class="t" style="left:673.5px;width:200px;text-align:center;top:872.87px;font-size:13.7px;font-weight:bold;z-index:3">Hardware</div>
<div class="tab" style="left:812px;top:867px;width:73px;height:24px;"></div>
<div class="t" style="left:748.5px;width:200px;text-align:center;top:873.77px;font-size:13.7px;font-weight:bold;z-index:3">Firmware</div>
<div class="tab" style="left:887px;top:867px;width:77px;height:24px;"></div>
<div class="t" style="left:825.5px;width:200px;text-align:center;top:873.77px;font-size:13.7px;font-weight:bold;z-index:3">Extruders</div>
<div class="tab" style="left:966px;top:867px;width:52px;height:24px;"></div>
<div class="t" style="left:892.0px;width:200px;text-align:center;top:873.77px;font-size:13.7px;font-weight:bold;z-index:3">Speed</div>
<div class="a" style="left:735px;top:890px;width:534px;height:184px;border:1px solid #8c8c8c;border-bottom:none;border-radius:4px 4px 0 0;background:#cbcbcb;box-shadow:inset 1px 1px 0 #e8e8e8"></div>
<div class="t" style="left:754.6px;top:905.98px;font-size:13.8px;">Number of Extruders</div>
<div class="sb" style="left:754px;top:920.5px;width:26px;height:19.5px"></div>
<div class="a" style="left:762px;top:925px;width:0;height:0;border-top:5.0px solid transparent;border-bottom:5.0px solid transparent;border-right:8px solid #111"></div>
<div class="fld" style="left:779px;top:920.5px;width:79px;height:19.5px"></div>
<div class="t" style="left:718.5px;width:200px;text-align:center;top:924.18px;font-size:13.8px;">1</div>
<div class="sb" style="left:857px;top:920.5px;width:27px;height:19.5px"></div>
<div class="a" style="left:868px;top:925px;width:0;height:0;border-top:5.0px solid transparent;border-bottom:5.0px solid transparent;border-left:8px solid #111"></div>
<div class="t" style="left:968.8px;top:905.58px;font-size:13.8px;">Loop / Solid Infill Overlap</div>
<div class="sb" style="left:919.5px;top:920.5px;width:35px;height:19.5px"></div>
<div class="t" style="left:837.0px;width:200px;text-align:center;top:924.18px;font-size:13.8px;">1.00</div>
<div class="a" style="left:955px;top:920.5px;width:219px;height:19px;border:1px solid #777;border-radius:4px;background:linear-gradient(#d6d6d6,#c6c6c6)"></div>
<div class="a" style="left:1163.5px;top:922px;width:8.5px;height:15.5px;border:1px solid #666;border-radius:3px;background:linear-gradient(#ececec,#c8c8c8)"></div>
<div class="t" style="left:778.7px;top:955.68px;font-size:13.8px;">Bed Size [mm]</div>
<div class="t" style="left:877.3px;top:955.68px;font-size:13.8px;">X</div>
<div class="fld" style="left:889.3px;top:952.5px;width:49.5px;height:19px"></div>
<div class="t" style="left:891.8px;top:955.88px;font-size:13.8px;">280</div>
<div class="t" style="left:952.7px;top:955.68px;font-size:13.8px;">Y</div>
<div class="fld" style="left:964.7px;top:952.5px;width:49.5px;height:19px"></div>
<div class="t" style="left:967.2px;top:955.88px;font-size:13.8px;">280</div>
<div class="t" style="left:1027.5px;top:955.68px;font-size:13.8px;">Z</div>
<div class="fld" style="left:1039.5px;top:952.5px;width:49.5px;height:19px"></div>
<div class="t" style="left:1042.0px;top:955.88px;font-size:13.8px;">300</div>
<div class="t" style="left:797.5px;top:990.98px;font-size:13.8px;">Offset [mm]</div>
<div class="t" style="left:877.3px;top:990.98px;font-size:13.8px;">X</div>
<div class="fld" style="left:889.3px;top:987.2px;width:49.5px;height:19px"></div>
<div class="t" style="left:891.8px;top:990.58px;font-size:13.8px;">0</div>
<div class="t" style="left:952.7px;top:990.98px;font-size:13.8px;">Y</div>
<div class="fld" style="left:964.7px;top:987.2px;width:49.5px;height:19px"></div>
<div class="t" style="left:967.2px;top:990.58px;font-size:13.8px;">0</div>
<div class="t" style="left:1027.5px;top:990.98px;font-size:13.8px;">Z</div>
<div class="fld" style="left:1039.5px;top:987.2px;width:49.5px;height:19px"></div>
<div class="t" style="left:1042.0px;top:990.58px;font-size:13.8px;">0</div>
<div class="t" style="left:751.6px;top:1026.08px;font-size:13.8px;">Bed Roughness [mm]</div>
<div class="fld" style="left:889.3px;top:1022.9px;width:49.5px;height:19px"></div>
<div class="t" style="left:891.8px;top:1026.28px;font-size:13.8px;">0</div>
<div class="fld" style="left:1039.5px;top:1022.9px;width:49.5px;height:19px"></div>
<div class="t" style="left:1042.0px;top:1026.28px;font-size:13.8px;">0</div>
<div class="t" style="left:952.4px;top:1026.08px;font-size:13.8px;">Z-Settle [mm]</div>
<div class="t" style="left:1144.4px;top:970.78px;font-size:13.8px;">$ / hour</div>
<div class="fld" style="left:1144.4px;top:985.3px;width:64px;height:19px"></div>
<div class="t" style="left:1146.9px;top:988.68px;font-size:13.8px;">0</div>
<div class="t" style="left:745.8px;top:1053.48px;font-size:13.8px;">Bed STL Model</div>
<div class="a" style="left:844.5px;top:1050.6px;width:388.5px;height:18.5px;background:#fff;border-top:2px solid #111;border-left:2px solid #111;border-bottom:1px solid #e0e0e0;border-right:1px solid #e0e0e0"></div>
<div class="t" style="left:847.0px;top:1053.48px;font-size:13.8px;">/Users/mhackney/Desktop/RostockBedSTL.stl</div>
<div class="a" style="left:1239px;top:1050px;width:24px;height:20px;background:linear-gradient(#e0e0e0,#c6c6c6);border-right:2px solid #111;border-bottom:2px solid #111;border-top:1px solid #f0f0f0;border-left:1px solid #f0f0f0"></div>
<div class="t" style="left:1150.5px;width:200px;text-align:center;top:1053.52px;font-size:14px;font-weight:bold;">...</div>
<div class="a" style="left:1276.4px;top:818.4px;width:12.6px;height:12.6px;background:#fff;border:1px solid #e8e8e8;border-top:1px solid #444;border-left:1px solid #444"></div>
<svg class="a" style="left:1276px;top:818px" width="14" height="14"><path d="M3 7L6 10.5L11.5 2.5" stroke="#000" stroke-width="1.8" fill="none"/></svg>
<div class="t" style="left:1292.9px;top:818.68px;font-size:13.8px;font-weight:bold;">Show Settings</div>
<div class="t" style="left:1295.5px;top:845.28px;font-size:13.8px;">Settings Level</div>
<div class="a" style="left:1274.7px;top:861.3px;width:126.7px;height:21.5px;background:#fff;border-top:2px solid #111;border-left:2px solid #111;border-bottom:1px solid #e0e0e0;border-right:1px solid #e0e0e0"></div>
<div class="a" style="left:1382.6px;top:863px;width:18px;height:19px;background:linear-gradient(#dedede,#c2c2c2);border-right:1px solid #111;border-bottom:1px solid #111"></div>
<div class="a" style="left:1386.5px;top:869px;width:0;height:0;border-left:4.5px solid transparent;border-right:4.5px solid transparent;border-top:5px solid #111"></div>
<div class="t" style="left:1280.0px;top:865.48px;font-size:13.8px;">Expert</div>
<div class="a" style="left:1276.4px;top:886.7px;width:12.6px;height:11.6px;background:#fff;border:1px solid #e8e8e8;border-top:1px solid #aaa;border-left:1px solid #aaa"></div>
<div class="t" style="left:1293.0px;top:885.58px;font-size:13.8px;color:#a6a6a6">Use Defaults</div>
<div class="t" style="left:1285.1px;top:906.38px;font-size:13.8px;">[Precision: 100%]</div>
<div class="a" style="left:1274.4px;top:921.5px;width:128.3px;height:18px;border:1px solid #777;border-radius:4px;background:linear-gradient(#e2e2e2,#c6c6c6)"></div>
<div class="a" style="left:1276px;top:928.5px;width:116px;height:3px;background:#000"></div>
<div class="a" style="left:1390.4px;top:923px;width:11.6px;height:14.5px;border:1px solid #777;border-radius:3px;background:linear-gradient(#ececec,#c8c8c8)"></div>
<div class="a" style="left:1394.5px;top:925.5px;width:3px;height:9px;border-left:1px solid #888;border-top:1px solid #888"></div>
<div class="a" style="left:1279px;top:941.2px;width:0;height:0;border-top:6.2px solid transparent;border-bottom:6.2px solid transparent;border-right:7.4px solid #000"></div>
<div class="t" style="left:1293.0px;top:941.48px;font-size:13.8px;">Fast</div>
<div class="t" style="left:1339.7px;top:941.48px;font-size:13.8px;">Precise</div>
<div class="a" style="left:1389.7px;top:941.2px;width:0;height:0;border-top:6.2px solid transparent;border-bottom:6.2px solid transparent;border-left:7.2px solid #000"></div>
<div class="a" style="left:1284.3px;top:965.3px;width:14.5px;height:59px;border:1px solid #777;border-radius:4px;background:linear-gradient(90deg,#cfcfcf,#dedede 50%,#c8c8c8)"></div>
<div class="a" style="left:1286.5px;top:988px;width:10.3px;height:13.6px;border:1px solid #777;border-radius:3px;background:linear-gradient(#e8e8e8,#c8c8c8)"></div>
<div class="ob" style="left:1309.2px;top:965px;width:64.4px;height:39.6px;font-size:14.7px;line-height:37.6px">Center</div>
<div class="a" style="left:1309.2px;top:1010.2px;width:64.4px;height:14.1px;border:1px solid #777;border-radius:4px;background:linear-gradient(#e0e0e0,#c6c6c6)"></div>
<div class="a" style="left:1334.3px;top:1012px;width:14.3px;height:10.6px;border:1px solid #777;border-radius:3px;background:linear-gradient(#e8e8e8,#c8c8c8)"></div>
<div class="ob" style="left:1274.2px;top:1030.6px;width:62.3px;height:38.7px;font-size:14px;line-height:16.2px;padding-top:2px">Copy<br>Printer</div>
<div class="ob" style="left:1341.3px;top:1030.6px;width:66px;height:38.7px;font-size:14px;line-height:16.2px;padding-top:2px;padding-right:4px">Delete<br>Printer</div>
<div class="a" style="left:1404px;top:1020px;width:10px;height:60px;background:#000"></div></body></html>
